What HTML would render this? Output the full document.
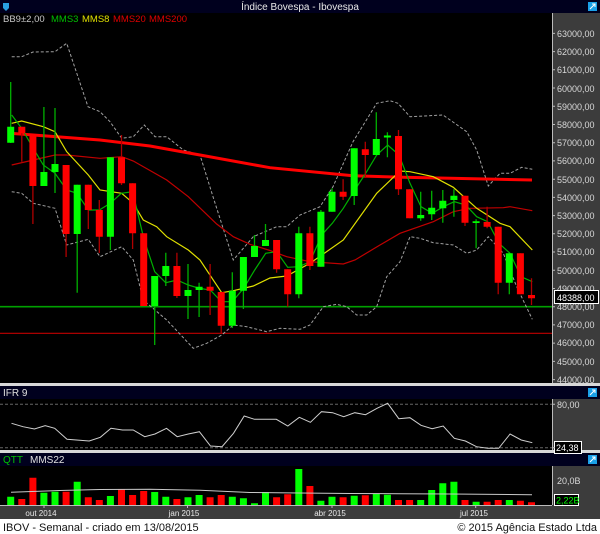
<!DOCTYPE html>
<html><head><meta charset="utf-8"><style>
html,body{margin:0;padding:0;background:#fff;width:600px;height:534px;overflow:hidden}
svg{display:block}
text{font-family:"Liberation Sans",sans-serif}
</style></head><body>
<svg width="600" height="534" viewBox="0 0 600 534" xmlns="http://www.w3.org/2000/svg">
<rect x="0" y="0" width="600" height="534" fill="#fff"/>
<rect x="0" y="0" width="600" height="13" fill="#00001e"/>
<rect x="0" y="13" width="552" height="370" fill="#000"/>
<rect x="552" y="13" width="48" height="370" fill="#3c3c3c"/>
<rect x="0" y="383" width="600" height="3" fill="#d8d8d8"/>
<rect x="0" y="386" width="600" height="13" fill="#00001e"/>
<rect x="0" y="399" width="552" height="51" fill="#000"/>
<rect x="552" y="399" width="48" height="51" fill="#3c3c3c"/>
<rect x="0" y="450" width="600" height="3" fill="#d8d8d8"/>
<rect x="0" y="453" width="600" height="13" fill="#00001e"/>
<rect x="0" y="466" width="552" height="39" fill="#000"/>
<rect x="552" y="466" width="48" height="39" fill="#3c3c3c"/>
<rect x="0" y="505" width="600" height="14" fill="#3c3c3c"/>
<line x1="552.5" y1="13" x2="552.5" y2="383" stroke="#bbb"/>
<line x1="552.5" y1="399" x2="552.5" y2="450" stroke="#bbb"/>
<line x1="552.5" y1="466" x2="552.5" y2="505" stroke="#bbb"/>
<line x1="0" y1="505.5" x2="552" y2="505.5" stroke="#bbb"/>

<path d="M3,3h6v5l-3,3l-3,-3z" fill="#29a0e0"/>
<text x="300" y="10" font-size="10" fill="#e8e8e8" text-anchor="middle">Índice Bovespa - Ibovespa</text>
<rect x="588" y="2" width="9" height="9" fill="#1aa0e8"/><path d="M590,9l5,-5M592,4h3v3" stroke="#fff" fill="none"/>
<rect x="588" y="388" width="9" height="9" fill="#1aa0e8"/><path d="M590,395l5,-5M592,390h3v3" stroke="#fff" fill="none"/>
<rect x="588" y="455" width="9" height="9" fill="#1aa0e8"/><path d="M590,462l5,-5M592,457h3v3" stroke="#fff" fill="none"/>

<text y="22" font-size="9.5"><tspan x="3" fill="#c8c8c8">BB9±2,00</tspan><tspan x="51" fill="#00c000">MMS3</tspan><tspan x="82" fill="#e0e000">MMS8</tspan><tspan x="113" fill="#e00000">MMS20</tspan><tspan x="149" fill="#e00000">MMS200</tspan></text>

<line x1="0" y1="306.7" x2="552" y2="306.7" stroke="#00a000" stroke-width="1.6"/>
<line x1="0" y1="333.3" x2="552" y2="333.3" stroke="#c00000" stroke-width="1.2"/>

<g fill="none" stroke="#a0a0a0" stroke-width="1" stroke-dasharray="3,2">
<polyline points="11.7,56.7 21.7,56.7 33,52 55,51.7 66.7,43.3 88,106.7 100,111.7 110,121.7 121.7,138.3 133.3,136.7 144.3,125 155,136.7 166.7,136.7 183.3,150 200,155 213,196.7 233.3,260 253.3,236.7 276.7,226.7 286.7,226.7 300,215 320,206.7 333,186.7 353,141.7 376.7,103.3 390,100.7 398,103.3 410,116.7 443,115 466.7,131.7 476.7,150 488.3,186 500,173.3 510,173.3 521.7,167.3 532.3,169.3"/>
<polyline points="11.7,191.7 21.7,193.3 33.3,203.3 55,208.3 66.7,245 88.3,239.3 100,256.7 121.7,246.7 133.3,260 143.3,300 166.7,320 193.3,348.3 206.7,343.3 221.7,335 233.3,325 246.7,326.7 266.7,331.7 280,328.3 300,329.3 310,325 323.3,306.7 336.7,304.3 346.7,306.7 356.7,315 366.7,315 376.7,306.7 386.7,276.7 400,261.7 410,236.7 420,238.3 433.3,242.7 453.3,245 466.7,253.3 476.7,250 488.3,236.7 503.3,253.3 516.7,286.7 532.3,319.3"/>
</g>

<polyline points="10,133.3 100,140 150,146 200,155 270,167.7 353,175.7 403,177.3 532,180" fill="none" stroke="#ff0000" stroke-width="3"/>
<polyline points="11.7,165 33.3,160 55,155 66.7,155 100,158.3 121.7,156.7 133.3,161 166.7,180 188.3,196.7 216.7,224 233.3,236.7 250,244.3 270,250.5 286.7,256.7 310,261.7 343.3,264 355,260 380,245 400,233.3 433.3,221.7 453.3,211.7 470,208.3 503.3,207.7 510,206.7 532.3,210.7" fill="none" stroke="#c00000" stroke-width="1.2"/>
<polyline points="11.7,123.3 21.7,121 43.3,126.7 55,131.7 66.7,151.7 88.3,175 100,190 121.7,193.3 133.3,203.3 143.3,220 156.7,226.7 166.7,236.7 188.3,250 200,260 221.7,292.7 233.3,290.7 253.3,286 270,278 286.7,276 310,263.3 343.3,240 376.7,193.3 400,171 410,171.7 433.3,176.7 453.3,187.3 476.7,208.3 500,223.3 510,226.7 532.3,250" fill="none" stroke="#e0e000" stroke-width="1.2"/>
<polyline points="11.7,115 21.7,128.3 33.3,148.3 43.3,165 55,173.3 66.7,190 77,193.3 88.3,210 99.3,210 110.3,203.3 121.3,193.3 132.7,191.7 143.7,238.3 154.7,271.7 165.7,282.7 177,280 188.3,285 199.3,288.3 210.3,290 221.3,301.7 232.3,301.7 243.7,288.3 254.7,270 265.7,253.3 276.7,251.7 287.7,267.3 299,266.7 310,261.7 321.7,235 332.3,223.3 343.3,208.3 354.7,190 365.7,173.3 376.7,155 387.7,145 399,155 410,183.3 421,206.7 432.3,213.3 443.3,206.7 454.3,201.7 465.7,205 476.7,216.7 487.7,221.7 499,243.3 510,253.3 521,276.7 532.3,281.7" fill="none" stroke="#00b000" stroke-width="1.2"/>

<path fill="none" stroke="#00b000" stroke-width="1.3" d="M10.7,82V143M43.9,107V186M55,108V193M77.2,184.7V292.7M110.4,157.3V250M154.7,276V345M165.8,252.7V286M188,264V319M199.1,282.7V317M232.3,272.3V328M243.4,257V309M254.5,235V257M265.5,224V246M298.8,226.7V298.3M320.9,210V266.7M332,188.3V211.7M354.2,148.3V205M376.3,112.3V155M387.4,132.3V157.3M420.7,191.7V220.7M431.7,190.7V220M442.8,190V222.7M453.9,189.3V216.7M476.1,219.3V248.3M509.3,253.3V294.3"/>
<path fill="none" stroke="#b00000" stroke-width="1.3" d="M21.8,126.7V161.7M32.9,136V224M66.1,165V257M88.3,184.7V229M99.3,200V253M121.5,135V185M132.6,183.3V249M143.7,233.3V306M176.9,252.7V298M210.1,264V315M221.2,292V333M276.6,240V272.7M287.7,269.3V306.7M309.9,226.7V270M343.1,179.3V200M365.3,141.7V178M398.5,130V195M409.6,189.3V218.3M465,195.7V226M487.1,206.7V228.3M498.2,226.7V294.3M520.4,253.3V294.3M531.5,278.3V305"/>
<path fill="#00ff00" d="M7.2,126.7h7v16h-7zM40.4,172h7v14h-7zM51.5,164h7v8h-7zM73.7,184.7h7v49.3h-7zM106.9,157.3h7v79.4h-7zM151.2,276h7v30h-7zM162.3,266h7v10h-7zM184.5,290h7v6h-7zM195.6,286.7h7v3.3h-7zM228.8,290.7h7v35h-7zM239.9,257h7v33.7h-7zM251,246h7v11h-7zM262,240h7v6h-7zM295.3,233.3h7v61h-7zM317.4,211.7h7v55h-7zM328.5,191.7h7v20h-7zM350.7,148.3h7v47.7h-7zM372.8,139h7v16h-7zM383.9,135.5h7v2h-7zM417.2,215h7v3.3h-7zM428.2,207.7h7v6.6h-7zM439.3,200.7h7v7.6h-7zM450.4,195.7h7v4.3h-7zM472.6,221.3h7v1.7h-7zM505.8,253.3h7v29.4h-7z"/>
<path fill="#ff0000" d="M18.3,126.7h7v6.6h-7zM29.4,136h7v50h-7zM62.6,165h7v69h-7zM84.8,184.7h7v25.3h-7zM95.8,210h7v26.7h-7zM118,157.3h7v26h-7zM129.1,183.3h7v50h-7zM140.2,233.3h7v72.7h-7zM173.4,266h7v30h-7zM206.6,286.7h7v4h-7zM217.7,292h7v33.7h-7zM273.1,240h7v29.3h-7zM284.2,269.3h7v25h-7zM306.4,233.3h7v32.7h-7zM339.6,191.7h7v5h-7zM361.8,149.3h7v5.7h-7zM395,136h7v53.3h-7zM406.1,189.3h7v29h-7zM461.5,195.7h7v27h-7zM483.6,222h7v4.7h-7zM494.7,226.7h7v56h-7zM516.9,253.3h7v41h-7zM528,295h7v3.3h-7z"/>

<g font-size="9" fill="#d8d8d8" stroke="none">
<text x="557" y="37">63000,00</text><text x="557" y="55">62000,00</text><text x="557" y="73">61000,00</text><text x="557" y="92">60000,00</text><text x="557" y="110">59000,00</text><text x="557" y="128">58000,00</text><text x="557" y="146">57000,00</text><text x="557" y="164">56000,00</text><text x="557" y="183">55000,00</text><text x="557" y="201">54000,00</text><text x="557" y="219">53000,00</text><text x="557" y="237">52000,00</text><text x="557" y="255">51000,00</text><text x="557" y="274">50000,00</text><text x="557" y="292">49000,00</text><text x="557" y="310">48000,00</text><text x="557" y="328">47000,00</text><text x="557" y="346">46000,00</text><text x="557" y="365">45000,00</text><text x="557" y="383">44000,00</text>
</g>
<path stroke="#bbb" d="M552,33.4h3M552,51.6h3M552,69.8h3M552,88h3M552,106.3h3M552,124.5h3M552,142.7h3M552,160.9h3M552,179.2h3M552,197.4h3M552,215.6h3M552,233.8h3M552,252h3M552,270.3h3M552,288.5h3M552,306.7h3M552,324.9h3M552,343.1h3M552,361.4h3M552,379.6h3"/>
<rect x="554.5" y="290.5" width="44" height="13" fill="#000" stroke="#fff"/>
<text x="557" y="301" font-size="9" fill="#fff">48388,00</text>

<text x="3" y="396" font-size="10" fill="#e0e0e0">IFR 9</text>
<g stroke="#666" stroke-dasharray="3,2"><line x1="0" y1="404.3" x2="552" y2="404.3"/><line x1="0" y1="447.7" x2="552" y2="447.7"/></g>
<polyline fill="none" stroke="#d0d0d0" stroke-width="1" points="11.5,423.3 23,426.7 34.4,429 45.2,425.7 54.7,428.3 67,439.3 89.2,441 100.3,437.3 111,428.3 122.5,430 133.2,430 144.7,436.7 155,434 166.5,428.3 177.2,436.7 188.3,434 199.4,431.7 210.5,446 222,446.7 233.5,433.3 244.2,416 254.5,419.3 276.3,419.3 287.8,426 299.3,417.3 310.4,422.3 321.5,411.7 332.6,412.7 343.7,416.7 354.8,412.7 365.5,414.7 377,408.3 387.7,403.3 398.8,418.7 409.9,417.7 421,425.3 432.1,428.7 443.2,426 454.3,438.3 465.4,441 476.5,446.7 487.6,448.3 498.7,448.3 510.1,434 521.2,440 532.3,442.7"/>
<text x="557" y="408" font-size="9" fill="#d8d8d8">80,00</text>
<rect x="554.5" y="441.5" width="27" height="12" fill="#000" stroke="#fff"/>
<text x="556" y="451" font-size="9" fill="#fff">24,38</text>
<path stroke="#bbb" d="M552,404.3h3M552,447.7h3"/>

<text y="463" font-size="10"><tspan x="3" fill="#00c000">QTT</tspan><tspan x="30" fill="#e0e0e0">MMS22</tspan></text>
<path fill="#00ff00" d="M7.2,496.7h7V505h-7zM40.4,492.7h7V505h-7zM51.5,491.7h7V505h-7zM73.7,481.7h7V505h-7zM106.9,496h7V505h-7zM151.2,492h7V505h-7zM162.3,496.7h7V505h-7zM184.5,497.3h7V505h-7zM195.6,495h7V505h-7zM228.8,496.7h7V505h-7zM239.9,498.3h7V505h-7zM251,503.3h7V505h-7zM262,492h7V505h-7zM295.3,469h7V505h-7zM317.4,500.7h7V505h-7zM328.5,496.7h7V505h-7zM350.7,495.7h7V505h-7zM372.8,493.7h7V505h-7zM383.9,494.7h7V505h-7zM417.2,500h7V505h-7zM428.2,490h7V505h-7zM439.3,483.3h7V505h-7zM450.4,481.7h7V505h-7zM472.6,501.7h7V505h-7zM505.8,500h7V505h-7z"/>
<path fill="#ff0000" d="M18.3,499h7V505h-7zM29.4,477.7h7V505h-7zM62.6,491.7h7V505h-7zM84.8,497.3h7V505h-7zM95.8,500h7V505h-7zM118,489h7V505h-7zM129.1,495h7V505h-7zM140.2,491h7V505h-7zM173.4,499h7V505h-7zM206.6,497.3h7V505h-7zM217.7,495h7V505h-7zM273.1,497.3h7V505h-7zM284.2,494.3h7V505h-7zM306.4,486h7V505h-7zM339.6,497.3h7V505h-7zM361.8,495.3h7V505h-7zM395,500h7V505h-7zM406.1,500h7V505h-7zM461.5,500h7V505h-7zM483.6,501.7h7V505h-7zM494.7,500h7V505h-7zM516.9,500.7h7V505h-7zM528,502.3h7V505h-7z"/>
<polyline fill="none" stroke="#c8c8c8" stroke-width="1" points="11,492.3 60,490.5 100,489.5 150,489.3 200,490.3 250,492.5 300,493 350,493.5 400,493.7 450,494 532,494.7"/>
<text x="557" y="484" font-size="9" fill="#d8d8d8">20,0B</text>
<rect x="554.5" y="494.5" width="24" height="11" fill="#000" stroke="#fff"/>
<text x="556" y="503.5" font-size="9" fill="#00ff00">2,22B</text>

<path stroke="#bbb" d="M44,505v3M187.5,505v3M332,505v3M475.7,505v3"/>
<g font-size="8" fill="#e8e8e8" text-anchor="middle">
<text x="41" y="516">out 2014</text><text x="184" y="516">jan 2015</text><text x="330" y="516">abr 2015</text><text x="474" y="516">jul 2015</text>
</g>

<text x="3" y="531" font-size="11" fill="#111" font-family="DejaVu Sans, sans-serif">IBOV - Semanal - criado em 13/08/2015</text>
<text x="597" y="531" font-size="11" fill="#111" text-anchor="end" font-family="DejaVu Sans, sans-serif">© 2015 Agência Estado Ltda</text>
</svg>
</body></html>
